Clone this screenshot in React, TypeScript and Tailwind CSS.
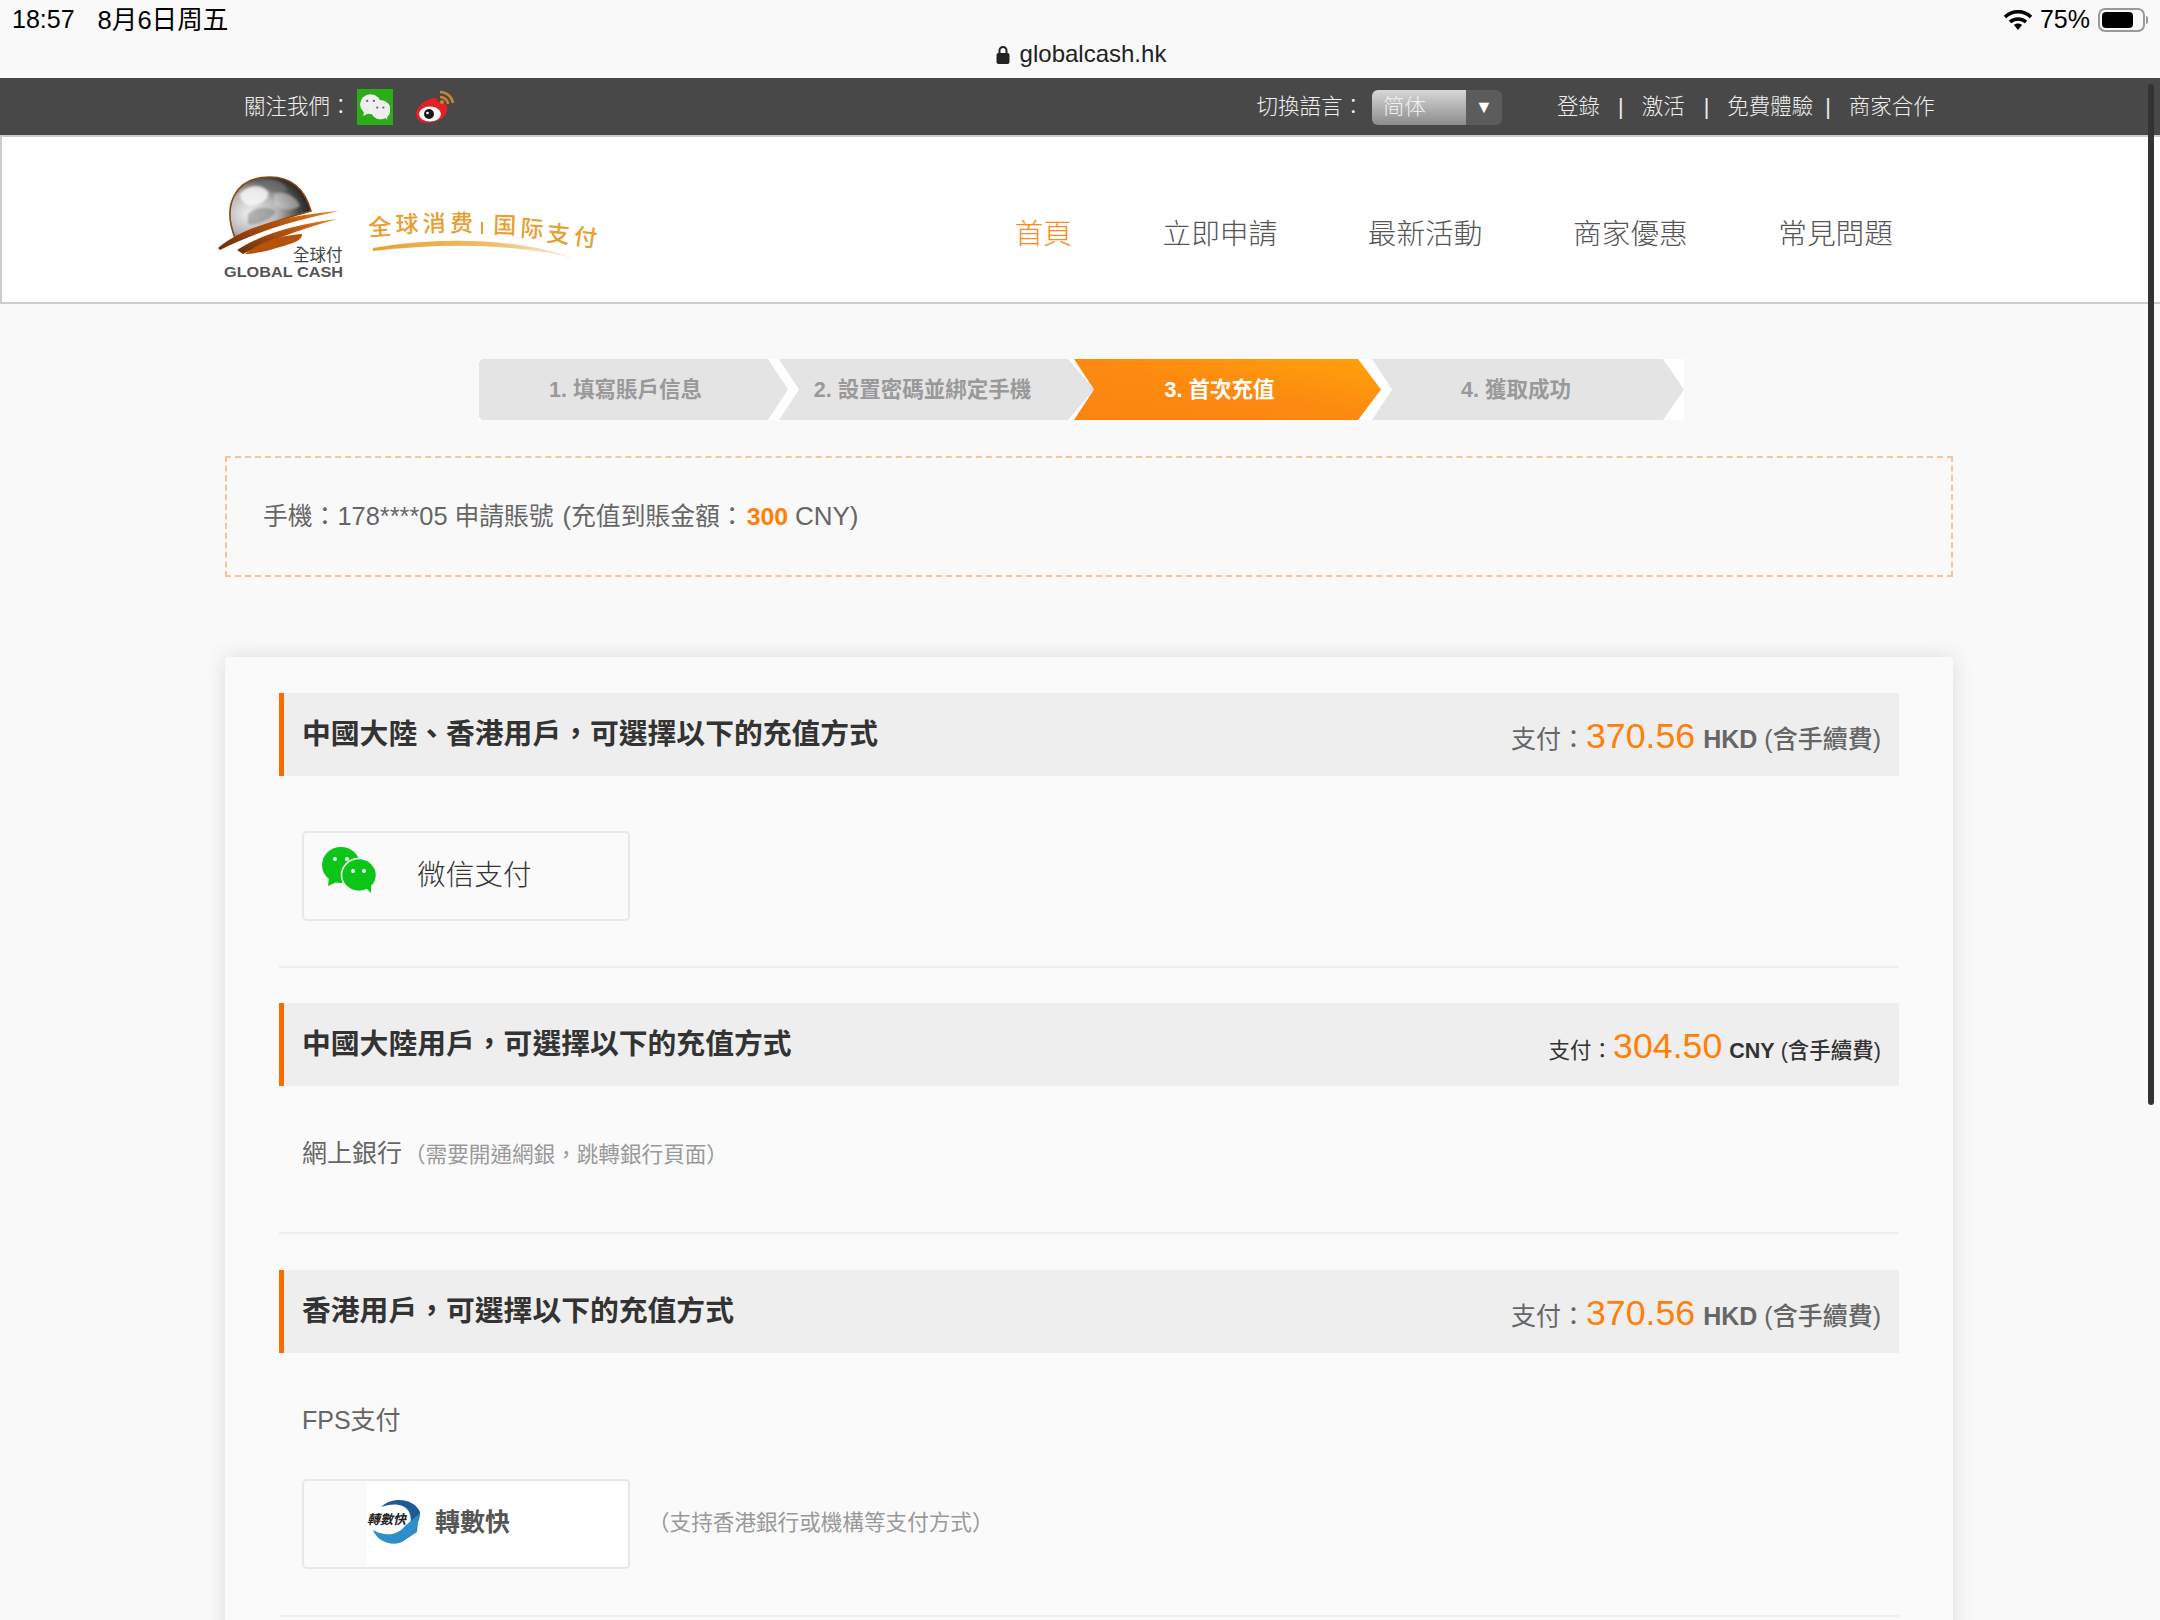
import type { ReactNode } from "react";

const sans = "font-['Liberation_Sans','Noto_Sans_CJK_TC',sans-serif]";

function WechatBubbles({ className, face, eye }: { className: string; face: string; eye: string }) {
  return (
    <svg viewBox="0 0 54 46" className={className}>
      <ellipse cx="19" cy="18" rx="19" ry="18" fill={face} />
      <path d="M7 30 L6 39 L17 34 Z" fill={face} />
      <circle cx="13" cy="12" r="2" fill={eye} />
      <circle cx="25" cy="12" r="2" fill={eye} />
      <ellipse cx="37" cy="28" rx="17.5" ry="16.5" fill={face} stroke="#f9f9f9" strokeWidth="1.5" />
      <path d="M44 41 L49 46 L49 36 Z" fill={face} />
      <circle cx="31" cy="24" r="2" fill={eye} />
      <circle cx="42" cy="24" r="2" fill={eye} />
    </svg>
  );
}

function WeiboIcon() {
  return (
    <svg viewBox="0 0 40 34" className="w-10 h-[34px]">
      <path
        d="M15 9 C19 7 23 8 23 12 C28 11 33 14 32 20 C31 28 22 33 12 33 C5 33 1 29 1 24 C1 18 8 11 15 9 Z"
        fill="#e2202a"
      />
      <ellipse cx="15" cy="24" rx="11" ry="7.5" fill="#ffffff" />
      <circle cx="14" cy="24" r="5" fill="#1a1a1a" />
      <circle cx="12.5" cy="23" r="1.3" fill="#ffffff" />
      <path d="M25 2 C32 2 37 7 38 13" fill="none" stroke="#c9852e" strokeWidth="2.5" />
      <path d="M25 7 C29 7 33 10 33 14" fill="none" stroke="#c9852e" strokeWidth="2.5" />
      <circle cx="27" cy="12" r="2" fill="#c9852e" />
    </svg>
  );
}

function Logo() {
  const slogan = [
    ["全", 369, 236, -4],
    ["球", 396, 233, -3],
    ["消", 423, 232, -2],
    ["费", 450, 231, 0],
    ["国", 493, 233, 2],
    ["际", 520, 236, 4],
    ["支", 546, 241, 6],
    ["付", 573, 244, 8],
  ] as const;
  return (
    <svg viewBox="200 160 420 130" className="w-[420px] h-[130px] shrink-0 mt-[10px]">
      <defs>
        <radialGradient id="globe" cx="0.25" cy="0.6" r="0.85">
          <stop offset="0" stopColor="#f2f2f2" />
          <stop offset="0.4" stopColor="#b5b5b5" />
          <stop offset="0.7" stopColor="#4a4a4a" />
          <stop offset="1" stopColor="#050505" />
        </radialGradient>
        <linearGradient id="swoosh" x1="0" x2="1" y1="1" y2="0">
          <stop offset="0" stopColor="#6b2d0a" />
          <stop offset="0.6" stopColor="#b5530c" />
          <stop offset="1" stopColor="#e8811a" />
        </linearGradient>
        <linearGradient id="curve" x1="0" x2="1">
          <stop offset="0" stopColor="#eaa02c" />
          <stop offset="0.6" stopColor="#f2bd6a" />
          <stop offset="1" stopColor="#fbeedd" />
        </linearGradient>
        <filter id="soft">
          <feGaussianBlur stdDeviation="1.2" />
        </filter>
        <clipPath id="globeClip">
          <path d="M235 238 C222 205 235 177 270 177 C292 177 305 190 311 211 C285 218 258 226 235 238 Z" />
        </clipPath>
      </defs>
      <path
        d="M235 238 C222 205 235 177 270 177 C292 177 305 190 311 211 C285 218 258 226 235 238 Z"
        fill="url(#globe)"
        stroke="#8a4513"
        strokeWidth="1.6"
      />
      <g clipPath="url(#globeClip)" filter="url(#soft)">
        <path d="M240 194 C248 184 262 184 268 192 C270 200 258 206 250 206 C244 204 240 200 240 194 Z" fill="#fafafa" opacity="0.8" />
        <path d="M262 180 C272 178 284 182 288 190 C280 194 270 192 262 186 Z" fill="#6f6f6f" opacity="0.75" />
        <path d="M274 194 C284 190 296 196 300 206 C290 212 280 210 274 204 Z" fill="#d8d8d8" opacity="0.5" />
        <path d="M248 214 C256 206 270 206 276 212 C270 220 256 226 248 224 Z" fill="#767676" opacity="0.5" />
      </g>
      <path d="M218 248 C245 225 290 215 339 211 C295 220 255 232 220 250 Z" fill="url(#swoosh)" />
      <path d="M237 250 C265 232 300 224 337 219 C305 228 275 238 243 254 Z" fill="url(#swoosh)" />
      <path d="M245 254 C262 240 285 235 302 234 C303 242 285 245 270 250 C262 252 252 254 245 254 Z" fill="#b5530c" />
      <text x="293" y="261" fontSize="16.5" fill="#444" fontFamily="'Noto Sans CJK TC',sans-serif">
        全球付
      </text>
      <text
        x="224"
        y="277"
        fontSize="15.5"
        fontWeight="700"
        fill="#555"
        textLength="119"
        lengthAdjust="spacingAndGlyphs"
        fontFamily="'Liberation Sans',sans-serif"
      >
        GLOBAL CASH
      </text>
      {slogan.map(([c, x, y, r]) => (
        <text
          key={c}
          x={x}
          y={y}
          fontSize="23"
          fontWeight="500"
          fill="#e6a032"
          fontFamily="'Noto Sans CJK SC',sans-serif"
          transform={`rotate(${r} ${x} ${y})`}
        >
          {c}
        </text>
      ))}
      <rect x="481" y="222" width="2" height="12" fill="#e6a032" />
      <path d="M373 248 C430 238 510 236 574 258 C510 243 440 243 373 251 Z" fill="url(#curve)" />
    </svg>
  );
}

function FpsLogo() {
  return (
    <svg viewBox="0 0 54 50" className="w-[54px] h-[50px] shrink-0">
      <path d="M14 9 C24 -1 46 -1 53 14 C53 24 48 30 40 34 C46 24 46 10 32 7 C26 6 20 7 14 9 Z" fill="#1d5b97" />
      <path d="M6 32 C10 44 28 50 38 42 L50 34 L52 16 L38 28 C32 36 20 40 6 32 Z" fill="#2d8ec9" />
      <text x="0" y="26" fontSize="13" fontWeight="700" fontStyle="italic" fill="#222" fontFamily="'Noto Sans CJK TC',sans-serif">
        轉數快
      </text>
    </svg>
  );
}

function Section({ title, pay, children }: { title: string; pay: ReactNode; children: ReactNode }) {
  return (
    <section className="border-b-2 border-[#eeeeee]">
      <div className="h-[83px] flex items-center justify-between bg-[#eeeeee] border-l-[5px] border-[#ff6a00] pl-[18px] pr-[18px]">
        <h2 className="text-[28.8px] font-bold text-[#333]">{title}</h2>
        {pay}
      </div>
      {children}
    </section>
  );
}

function PayLarge({ amount, unit }: { amount: string; unit: string }) {
  return (
    <p className="flex items-baseline text-[25px] text-[#666] pt-[5px] whitespace-pre">
      支付：
      <span className="text-[35.7px] text-[#ff8008]">{amount}</span>
      <span className="font-bold ml-[8px]">{unit}</span>
      <span className="font-medium ml-[7px]">(含手續費)</span>
    </p>
  );
}

function PaySmall({ amount, unit }: { amount: string; unit: string }) {
  return (
    <p className="flex items-baseline text-[21.5px] text-[#333] pt-[5px] whitespace-pre">
      支付：
      <span className="text-[35.7px] text-[#ff8008]">{amount}</span>
      <span className="font-bold ml-[7px]">{unit}</span>
      <span className="font-medium ml-[6px]">(含手續費)</span>
    </p>
  );
}

const steps = [
  {
    label: "1. 填寫賬戶信息",
    cls: "w-[309px] pr-[16px] bg-[#e4e4e4] text-[#999] [clip-path:polygon(3px_0,289px_0,309px_50%,289px_100%,3px_100%,0_calc(100%-3px),0_3px)]",
  },
  {
    label: "2. 設置密碼並綁定手機",
    cls: "w-[315px] ml-[-9px] pr-[28px] bg-[#e4e4e4] text-[#999] [clip-path:polygon(0_0,289px_0,315px_50%,289px_100%,0_100%,20px_50%)]",
  },
  {
    label: "3. 首次充值",
    cls: "w-[307px] ml-[-20px] pr-[16px] bg-linear-to-tr from-[#fb8410] via-[#fc8a10] to-[#ffa20a] text-white [clip-path:polygon(0_0,284px_0,307px_50%,284px_100%,0_100%,20px_50%)]",
  },
  {
    label: "4. 獲取成功",
    cls: "w-[312px] ml-[-9px] pr-[24px] bg-[#e4e4e4] text-[#999] [clip-path:polygon(0_0,291px_0,312px_50%,291px_100%,0_100%,20px_50%)]",
  },
];

export default function App() {
  return (
    <div className={`relative w-[2160px] h-[1620px] overflow-hidden bg-[#f9f9f9] ${sans}`}>
      {/* iOS status bar + address */}
      <div className="h-[78px] bg-[#f9f9f9] text-black">
        <div className="flex items-center h-[40px] pl-[12px] text-[25px] font-['Liberation_Sans','Noto_Sans_CJK_SC',sans-serif]">
          <span>18:57</span>
          <span className="ml-[23px] text-[25.6px]">8月6日周五</span>
          <div className="ml-auto flex items-center pr-[12px]">
            <svg viewBox="0 0 30 22" className="w-[30px] h-[22px]">
              <path d="M2 8 C9 1 21 1 28 8" fill="none" stroke="#000" strokeWidth="3.4" />
              <path d="M7 13 C11 9 19 9 23 13" fill="none" stroke="#000" strokeWidth="3.4" />
              <path d="M11 16 C13 14 17 14 19 16 L15 21 Z" fill="#000" />
            </svg>
            <span className="ml-[7px]">75%</span>
            <div className="ml-[8px] flex items-center">
              <div className="w-[47px] h-[24px] rounded-[7px] border-2 border-[#999] p-[2px]">
                <div className="w-[31px] h-full rounded-[4px] bg-black" />
              </div>
              <div className="w-[2px] h-[8px] ml-[1px] rounded-r bg-[#999]" />
            </div>
          </div>
        </div>
        <div className="flex items-center justify-center gap-[10px] text-[24px] leading-[26px] text-[#222] pl-[2px] pt-[1px]">
          <svg viewBox="0 0 14 19" className="w-[14px] h-[19px]">
            <path d="M3.5 9 V5.5 a3.5 3.5 0 0 1 7 0 V9" fill="none" stroke="#222" strokeWidth="2" />
            <rect x="0.5" y="8" width="13" height="11" rx="2" fill="#222" />
          </svg>
          <span>globalcash.hk</span>
        </div>
      </div>

      {/* dark top bar */}
      <div className="flex items-center h-[57px] bg-[#484848] text-[21.5px] text-[#eeeeee] pl-[244px] pt-[1px] font-light">
        <span>關注我們：</span>
        <div className="ml-[5px] flex items-center justify-center w-[36px] h-[36px] bg-[#2dac1a]">
          <WechatBubbles className="w-[30px] h-[28px]" face="#eeeeee" eye="#666" />
        </div>
        <div className="ml-[22px]">
          <WeiboIcon />
        </div>
        <span className="ml-[802px]">切換語言：</span>
        <div className="ml-[8px] flex w-[130px] h-[35px] rounded-[6px] overflow-hidden">
          <div className="w-[94px] pl-[11px] flex items-center bg-linear-to-b from-[#d8d8d8] to-[#8c8c8c] text-[#f0f0f0]">简体</div>
          <div className="flex-1 flex items-center justify-center bg-[#5c5c5c] text-white text-[18px]">▼</div>
        </div>
        <span className="ml-[55px]">登錄</span>
        <span className="ml-[18px]">|</span>
        <span className="ml-[18px]">激活</span>
        <span className="ml-[19px]">|</span>
        <span className="ml-[18px]">免費體驗</span>
        <span className="ml-[12px]">|</span>
        <span className="ml-[18px]">商家合作</span>
      </div>

      {/* header */}
      <header className="flex items-center justify-between h-[169px] bg-white border-y-2 border-l-2 border-[#cccccc] pl-[198px] pr-[267px]">
        <Logo />
        <nav className="flex gap-[90.5px] text-[28.7px] text-[#555] pt-[31px] font-light">
          <a className="text-[#ff8a1a]">首頁</a>
          <a>立即申請</a>
          <a>最新活動</a>
          <a>商家優惠</a>
          <a>常見問題</a>
        </nav>
      </header>

      {/* steps */}
      <div className="mt-[55px] ml-[479px] w-fit flex h-[61px] bg-white text-[21.5px] font-bold">
        {steps.map((s) => (
          <div key={s.label} className={`flex items-center justify-center pt-[2px] ${s.cls}`}>
            {s.label}
          </div>
        ))}
      </div>

      {/* info box */}
      <div className="mt-[36px] ml-[225px] w-[1728px] h-[121px] flex items-center pl-[36px] border-2 border-dashed border-[#f2c79c] text-[24.8px] text-[#666]">
        <p>
          手機：<span className="text-[25.4px]">178****05</span> 申請賬號 <span className="ml-[2px] text-[25.6px]">(</span>充值到賬金額：
          <b className="ml-[2px] text-[#ff8008]">300</b> <span className="text-[26px]">CNY)</span>
        </p>
      </div>

      {/* card */}
      <main className="mt-[80px] ml-[225px] w-[1728px] h-[1000px] rounded-[4px] bg-[#fafafa] pt-[36px] pl-[54px] pr-[54px] shadow-[0_0_22px_rgba(0,0,0,0.12)]">
        <Section title="中國大陸、香港用戶，可選擇以下的充值方式" pay={<PayLarge amount="370.56" unit="HKD" />}>
          <div className="pt-[55px] pb-[45px] pl-[23px]">
            <div className="flex items-center w-[328px] h-[90px] rounded-[5px] border-2 border-[#e8e8e8] pl-[18px]">
              <WechatBubbles className="w-[54px] h-[46px] mb-[12px]" face="#0cc518" eye="#ffffff" />
              <span className="ml-[41px] text-[28.7px] text-[#333] font-light">微信支付</span>
            </div>
          </div>
        </Section>

        <div className="mt-[35px]">
          <Section title="中國大陸用戶，可選擇以下的充值方式" pay={<PaySmall amount="304.50" unit="CNY" />}>
            <div className="h-[146px] pt-[49px] pl-[23px] flex items-baseline text-[25px] text-[#666]">
              網上銀行
              <span className="ml-[2px] text-[21.6px] text-[#999]">（需要開通網銀，跳轉銀行頁面）</span>
            </div>
          </Section>
        </div>

        <div className="mt-[36px]">
          <Section title="香港用戶，可選擇以下的充值方式" pay={<PayLarge amount="370.56" unit="HKD" />}>
            <div className="pl-[23px] pt-[50px] pb-[46px]">
              <p className="text-[25px] leading-[34px] text-[#666]">FPS支付</p>
              <div className="mt-[42px] flex items-center">
                <div className="flex w-[328px] h-[90px] rounded-[5px] border-2 border-[#e8e8e8] overflow-hidden">
                  <div className="w-[63px]" />
                  <div className="flex-1 flex items-center bg-white pb-[2px]">
                    <FpsLogo />
                    <span className="ml-[14px] text-[25px] font-bold text-[#555]">轉數快</span>
                  </div>
                </div>
                <span className="ml-[18px] pb-[2px] text-[21.6px] text-[#999]">（支持香港銀行或機構等支付方式）</span>
              </div>
            </div>
          </Section>
        </div>
      </main>

      {/* overlay scrollbar */}
      <div className="absolute left-[2148px] top-[84px] w-[6px] h-[1021px] rounded-full bg-[#333]" />
    </div>
  );
}
